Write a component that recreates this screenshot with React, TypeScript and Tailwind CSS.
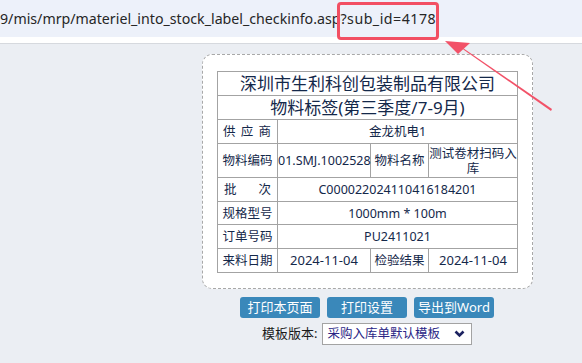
import React from 'react';

const cell = 'border border-[#a3a3a3] text-center align-middle';

export default function App() {
  return (
    <div
      className="relative w-[582px] h-[363px] overflow-hidden bg-[#ebeef3] text-[#14284a]"
      style={{ fontFamily: '"Noto Sans", "Noto Sans CJK SC", sans-serif' }}
    >
      {/* address bar */}
      <div className="h-[37px] bg-[#edf1fa] flex items-center text-[14.2px] text-[#262626] whitespace-nowrap">
        <span>9/mis/mrp/materiel_into_stock_label_checkinfo.asp</span>
        <span className="relative tracking-[0.5px]">
          ?sub_id=4178
          {/* red highlight box */}
          <span className="absolute left-[-3px] right-[-3px] top-[-6px] bottom-[-11px] border-[3px] border-[#f24f63] rounded-[4px]" />
        </span>
      </div>
      <div className="h-[7px] bg-white border-b border-[#d6d9de]" />

      {/* label card */}
      <div className="ml-[202px] mt-[10px] w-[331px] bg-white border border-dashed border-[#a8a8a8] rounded-[10px] px-[14px] pt-[16px] pb-[15px]">
        <table className="w-[300px] border-collapse table-fixed text-[12.5px] leading-[15px]">
          <colgroup>
            <col className="w-[60px]" />
            <col className="w-[93px]" />
            <col className="w-[58px]" />
            <col className="w-[89px]" />
          </colgroup>
          <tbody>
            <tr className="h-[24px]">
              <td colSpan={4} className={`${cell} text-[17px] leading-[20px]`}>深圳市生利科创包装制品有限公司</td>
            </tr>
            <tr className="h-[24px]">
              <td colSpan={4} className={`${cell} text-[17px] leading-[20px]`}>物料标签(第三季度/7-9月)</td>
            </tr>
            <tr className="h-[24px]">
              <td className={`${cell} tracking-[1px]`}>供 应 商</td>
              <td colSpan={3} className={cell}>金龙机电1</td>
            </tr>
            <tr className="h-[34px]">
              <td className={cell}>物料编码</td>
              <td className={`${cell} whitespace-nowrap`}>01.SMJ.1002528</td>
              <td className={cell}>物料名称</td>
              <td className={cell}>测试卷材扫码入库</td>
            </tr>
            <tr className="h-[24px]">
              <td className={cell}>
                <div className="flex justify-between px-[6px]">
                  <span>批</span>
                  <span>次</span>
                </div>
              </td>
              <td colSpan={3} className={cell}>C000022024110416184201</td>
            </tr>
            <tr className="h-[23px]">
              <td className={cell}>规格型号</td>
              <td colSpan={3} className={cell}>1000mm * 100m</td>
            </tr>
            <tr className="h-[24px]">
              <td className={cell}>订单号码</td>
              <td colSpan={3} className={cell}>PU2411021</td>
            </tr>
            <tr className="h-[24px]">
              <td className={cell}>来料日期</td>
              <td className={`${cell} text-[13px]`}>2024-11-04</td>
              <td className={cell}>检验结果</td>
              <td className={`${cell} text-[13px]`}>2024-11-04</td>
            </tr>
          </tbody>
        </table>
      </div>

      {/* buttons */}
      <div className="ml-[240px] mt-[8px] flex gap-[7px] text-[13px] text-white">
        <button className="w-[80px] h-[21px] rounded-[3px] bg-[#3a88ba] leading-[21px]">打印本页面</button>
        <button className="w-[80px] h-[21px] rounded-[3px] bg-[#3a88ba] leading-[21px]">打印设置</button>
        <button className="w-[80px] h-[21px] rounded-[3px] bg-[#3a88ba] leading-[21px]">导出到Word</button>
      </div>

      {/* template select */}
      <div className="ml-[262px] mt-[5px] flex items-center gap-[5px] text-[13px]">
        <span className="text-[#1a1a1a]">模板版本:</span>
        <div className="w-[150px] h-[22px] bg-white border border-[#a3a3a3] flex items-center justify-between pl-[4px] pr-[6px] text-[12.5px] text-[#2a2585]">
          <span>采购入库单默认模板</span>
          <svg width="11" height="8" viewBox="0 0 11 8">
            <path d="M1.5 1.5 L5.5 5.5 L9.5 1.5" fill="none" stroke="#1c2260" strokeWidth="2.6" />
          </svg>
        </div>
      </div>

      {/* arrow */}
      <svg className="absolute left-0 top-0" width="582" height="363" viewBox="0 0 582 363">
        <polygon points="445,41 470,43 458,54" fill="#f25268" />
        <polygon points="460,46 464,50 551,111 552,109" fill="#f25268" />
      </svg>
    </div>
  );
}
